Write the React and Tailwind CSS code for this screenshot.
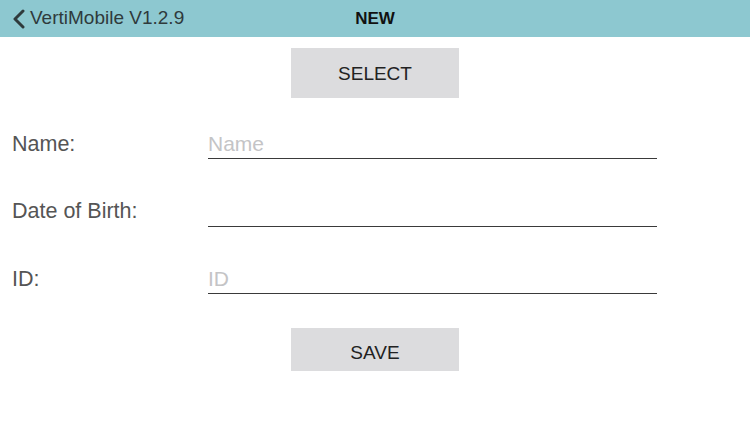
import React from "react";

const fields = [
  { label: "Name:", placeholder: "Name" },
  { label: "Date of Birth:", placeholder: "" },
  { label: "ID:", placeholder: "ID" },
];

const App = () => {
  return (
    <div className="w-[750px] h-[422px] bg-white font-['Liberation_Sans',Helvetica,Arial,sans-serif] overflow-hidden">
      {/* top bar */}
      <div className="relative h-[37px] bg-[#8dc8d0] flex items-center">
        <button className="flex items-center pl-[12px] text-[#2f3a3c] text-[19px]">
          <svg width="14" height="20" viewBox="0 0 14 20" className="mr-[4px]">
            <path d="M11 2 L3 10 L11 18" fill="none" stroke="#2f3a3c" strokeWidth="3" strokeLinecap="round" strokeLinejoin="round" />
          </svg>
          VertiMobile V1.2.9
        </button>
        <div className="absolute left-0 right-0 text-center text-[17px] font-bold text-[#111] pointer-events-none">
          NEW
        </div>
      </div>

      <div className="flex justify-center mt-[11px]">
        <button className="w-[168px] h-[50px] bg-[#dcdcde] text-[19px] text-[#222] pt-[2px]">
          SELECT
        </button>
      </div>

      <div className="flex flex-col gap-[33.5px] mt-[27px]">
        {fields.map((f) => (
          <div key={f.label} className="flex items-center h-[34px]">
            <div className="w-[208px] pl-[12px] pt-[4px] text-[21.5px] text-[#555]">{f.label}</div>
            <input
              placeholder={f.placeholder}
              className="w-[449px] h-[34px] pt-[4px] border-b-[1.5px] border-[#3a3a3a] text-[21px] text-[#333] placeholder:text-[#c4c4c6] outline-none bg-transparent"
            />
          </div>
        ))}
      </div>

      <div className="flex justify-center mt-[34px]">
        <button className="w-[168px] h-[43px] bg-[#dcdcde] text-[19px] text-[#222] pt-[7px]">
          SAVE
        </button>
      </div>
    </div>
  );
};

export default App;
